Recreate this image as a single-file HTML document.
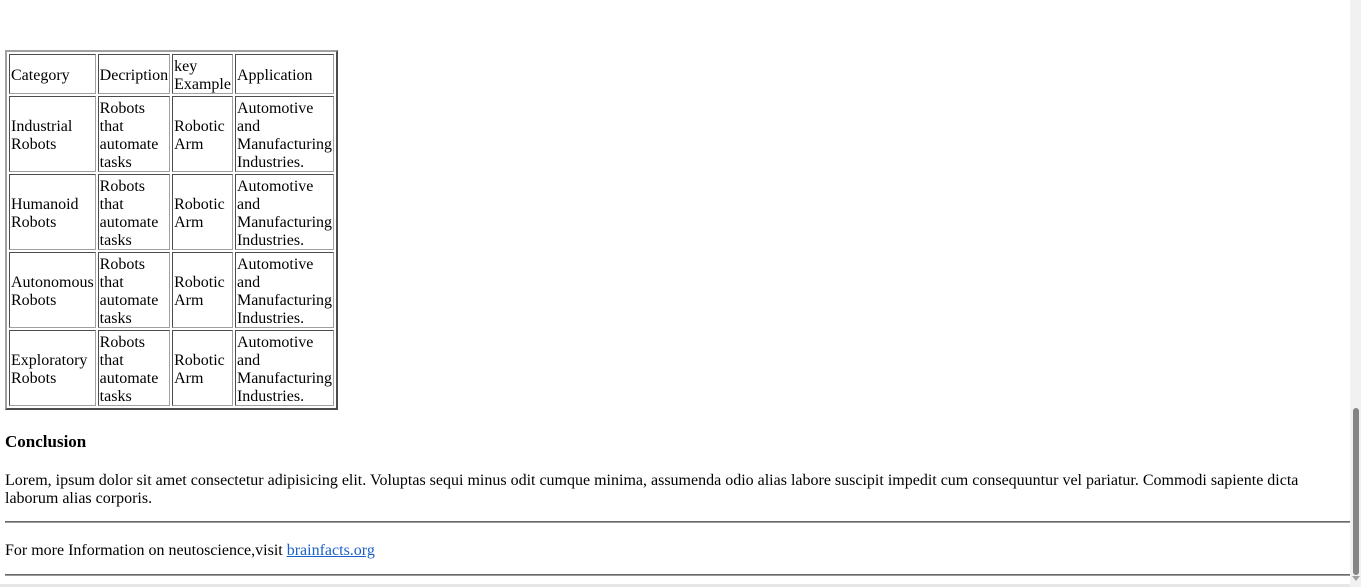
<!DOCTYPE html>
<html><head><style>
html,body{margin:0;padding:0;overflow:hidden;width:1361px;height:587px;background:#fff;font-family:"Liberation Serif",serif;font-size:16px;color:#000}
#t{position:absolute;left:5px;top:50px;border-collapse:separate;border-spacing:2px;border:2px outset #a0a0a0;font-size:16px;line-height:18px}
#t td{border:1px inset #a0a0a0;padding:1px;vertical-align:middle}
#t span{position:relative;top:2px}
.a{position:absolute;left:5px;margin:0}
h3.a{font-size:17px;font-weight:bold;top:432px}
.hr{position:absolute;left:5px;width:1345px;height:0;border-top:1px solid #6a6a6a;border-bottom:1px solid #9a9a9a}
a{color:#1a60c8}
.sb{position:absolute;left:1350px;top:0;width:11px;height:587px;background:#f1f1f1}
.th{position:absolute;left:1353px;top:408px;width:6px;height:167px;background:#858585;border-radius:3px}
</style></head><body>
<table id="t">
<tr><td><span>Category</span></td><td><span>Decription</span></td><td><span>key<br>Example</span></td><td><span>Application</span></td></tr>
<tr><td><span>Industrial<br>Robots</span></td><td><span>Robots<br>that<br>automate<br>tasks</span></td><td><span>Robotic<br>Arm</span></td><td><span>Automotive<br>and<br>Manufacturing<br>Industries.</span></td></tr>
<tr><td><span>Humanoid<br>Robots</span></td><td><span>Robots<br>that<br>automate<br>tasks</span></td><td><span>Robotic<br>Arm</span></td><td><span>Automotive<br>and<br>Manufacturing<br>Industries.</span></td></tr>
<tr><td><span>Autonomous<br>Robots</span></td><td><span>Robots<br>that<br>automate<br>tasks</span></td><td><span>Robotic<br>Arm</span></td><td><span>Automotive<br>and<br>Manufacturing<br>Industries.</span></td></tr>
<tr><td><span>Exploratory<br>Robots</span></td><td><span>Robots<br>that<br>automate<br>tasks</span></td><td><span>Robotic<br>Arm</span></td><td><span>Automotive<br>and<br>Manufacturing<br>Industries.</span></td></tr>
</table>
<h3 class="a">Conclusion</h3>
<p class="a" style="top:472px;width:1330px;line-height:18px">Lorem, ipsum dolor sit amet consectetur adipisicing elit. Voluptas sequi minus odit cumque minima, assumenda odio alias labore suscipit impedit cum consequuntur vel pariatur. Commodi sapiente dicta laborum alias corporis.</p>
<div class="hr" style="top:521px"></div>
<p class="a" style="top:542px;line-height:18px">For more Information on neutoscience,visit <a href="#">brainfacts.org</a></p>
<div class="hr" style="top:574px"></div>
<div style="position:absolute;left:0;top:584px;width:1350px;height:3px;background:#e6e6e6"></div>
<div class="sb"></div><div class="th"></div>
<div style="position:absolute;left:1352px;top:576px;width:0;height:0;border-left:4px solid transparent;border-right:4px solid transparent;border-top:5px solid #a0a0a0"></div>
</body></html>
